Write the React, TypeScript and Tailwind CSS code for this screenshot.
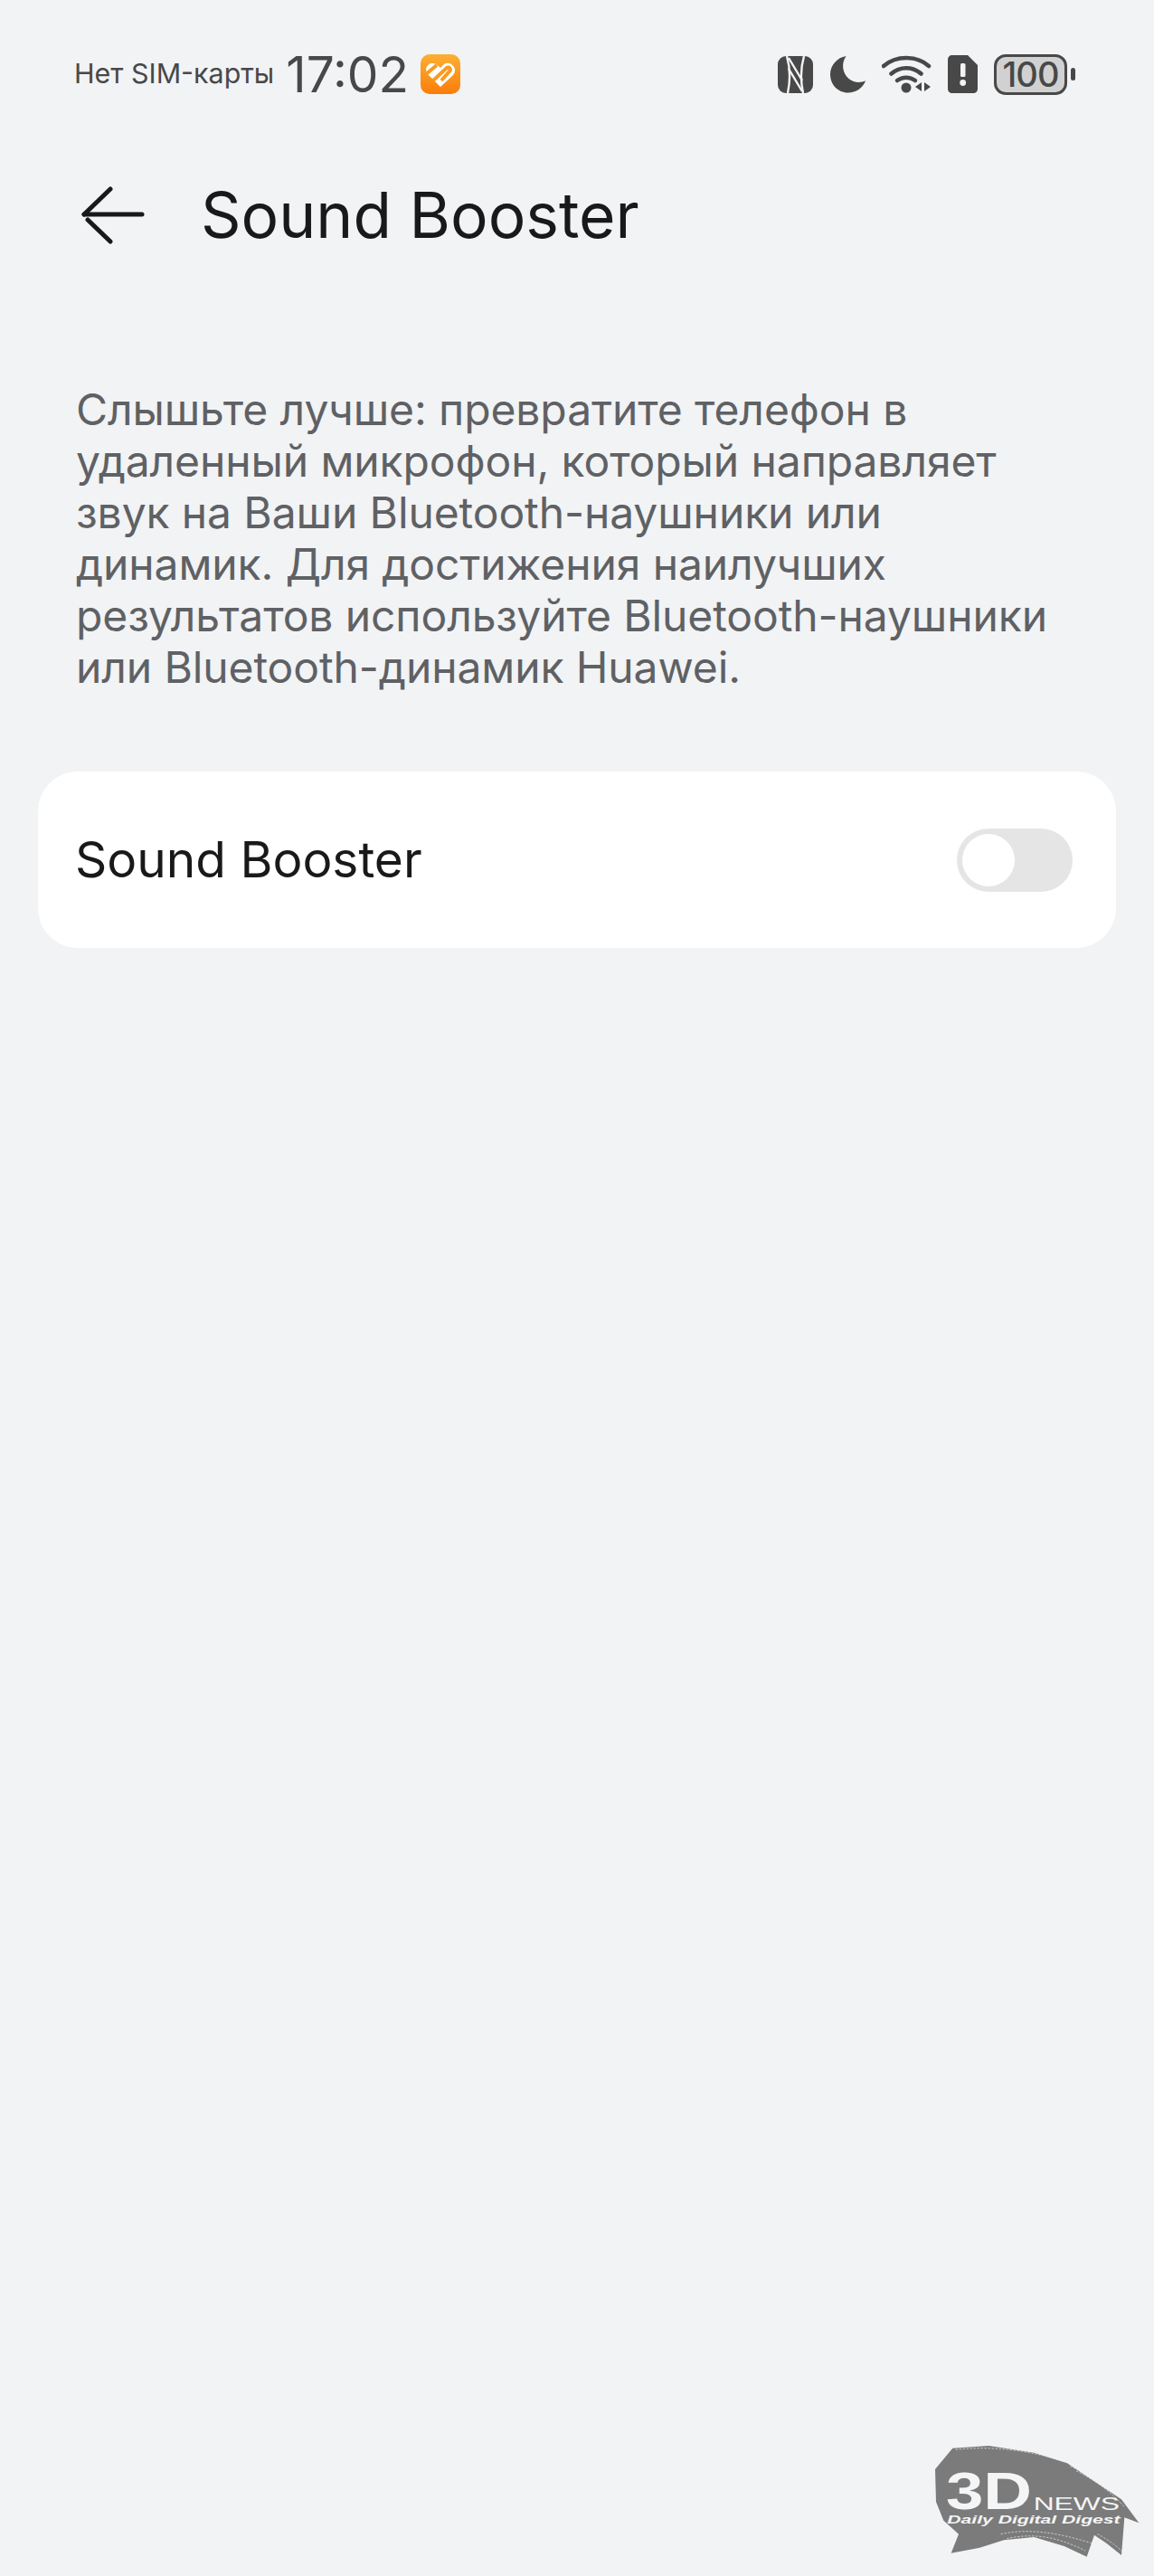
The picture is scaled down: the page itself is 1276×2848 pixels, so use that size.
const FONT = 'font-["Inter","Noto_Sans",sans-serif]';

function HealthIcon() {
  return (
    <svg width="44" height="44" viewBox="0 0 44 44" className="ml-[13px]">
      <defs>
        <linearGradient id="health" x1="0" y1="0" x2="0" y2="1">
          <stop offset="0" stopColor="#fbb034" />
          <stop offset="1" stopColor="#fb7d0a" />
        </linearGradient>
      </defs>
      <rect width="44" height="44" rx="10" fill="url(#health)" />
      <path
        d="M22 36 L8 22 C4 17 7 10 13 10 C17 10 19 12 22 15 L26 11 C30 8 37 11 38 17 C38 20 37 22 35 24 Z"
        fill="#fff"
      />
      <path d="M6 22 L18 12 M14 29 L29 15 C32 13 34 17 32 19 L23 29" fill="none" stroke="#fb9a1e" strokeWidth="4" />
    </svg>
  );
}

function NfcIcon() {
  return (
    <svg width="39" height="41" viewBox="0 0 39 41" fill="none" stroke="#f1f3f5" strokeWidth="2.4">
      <rect width="39" height="41" rx="9" fill="#484848" stroke="none" />
      <path d="M10 0 C14 14 14 27 11 41" />
      <path d="M29 0 C25 14 25 27 28 41" />
      <path d="M12 2 L27 27" />
      <path d="M12 14 L27 39" />
    </svg>
  );
}

function MoonIcon() {
  return (
    <svg width="40" height="42" viewBox="0 0 41 42" className="ml-[19px]">
      <path
        d="M18 0.5 C12 9 14 20 21 26 C27 31 34 31 40 28.5 C37 37 29 42 20 42 C9 42 0 33 0 21 C0 11 8 2 18 0.5 Z"
        fill="#484848"
      />
    </svg>
  );
}

function WifiIcon() {
  return (
    <svg width="56" height="44" viewBox="0 0 56 44" className="ml-[17px]" fill="none">
      <path d="M2 13 C16 1 38 1 52 13" stroke="#484848" strokeWidth="4.5" strokeLinecap="round" />
      <path d="M10.5 21.5 C20 13 34 13 43.5 21.5" stroke="#484848" strokeWidth="4.5" strokeLinecap="round" />
      <path d="M17 29 C23 24.5 31 24.5 37 29" stroke="#484848" strokeWidth="4.5" strokeLinecap="round" />
      <circle cx="27" cy="37" r="5.5" fill="#484848" />
      <path d="M44 31 V41 L37 36 Z M47 31 V41 L54 36 Z" fill="#484848" />
    </svg>
  );
}

function SimIcon() {
  return (
    <svg width="33" height="42" viewBox="0 0 33 42" className="ml-[17px]">
      <path
        d="M5 0 H22 L33 11 V37 C33 40 31 42 28 42 H5 C2 42 0 40 0 37 V5 C0 2 2 0 5 0 Z"
        fill="#484848"
      />
      <rect x="14" y="9" width="5.5" height="15" rx="1.5" fill="#f1f3f5" />
      <circle cx="16.7" cy="30.5" r="3.4" fill="#f1f3f5" />
    </svg>
  );
}

function Battery() {
  return (
    <div className="ml-[18px] flex items-center">
      <div className="flex h-[45px] w-[81px] items-center justify-center rounded-[13px] border-[3.5px] border-[#484848] bg-[#d1d1d1] text-[38px] leading-none font-medium tracking-[-1px] text-[#484848]">
        100
      </div>
      <div className="ml-[4px] h-[14px] w-[5px] rounded-full bg-[#484848]" />
    </div>
  );
}

function BackArrow() {
  return (
    <svg width="70" height="64" viewBox="0 0 70 64" fill="none" stroke="#191919" strokeWidth="5" strokeLinecap="round">
      <path d="M3 31 H67" />
      <path d="M32 3 L3 31" />
      <path d="M7 37 L32 61" />
    </svg>
  );
}

function StatusBar() {
  return (
    <div className="flex h-[60px] items-center justify-between pr-[87px] pl-[82px]">
      <div className="flex items-center">
        <span className="text-[30.4px] text-[#484848]">Нет SIM-карты</span>
        <span className="ml-[13px] text-[55px] text-[#484848]">17:02</span>
        <HealthIcon />
      </div>
      <div className="flex items-center">
        <NfcIcon />
        <MoonIcon />
        <WifiIcon />
        <SimIcon />
        <Battery />
      </div>
    </div>
  );
}

function Toggle() {
  return (
    <div className="flex h-[70px] w-[128px] items-center rounded-full bg-[#e5e5e5] pl-[6px]">
      <div className="h-[58px] w-[58px] rounded-full bg-white" />
    </div>
  );
}

/** Filigrane 3DNews en bas à droite, par-dessus la page. */
function Watermark() {
  return (
    <svg width="266" height="168" viewBox="0 0 798 504" className="absolute right-0 bottom-0">
      <path
        d="M130 80 L250 72 L400 95 L510 130 L600 190 L690 250 L748 328 L700 310 L690 435 L640 395 L600 368 L575 440 L500 405 L400 375 L300 385 L220 410 L125 428 L150 365 L100 320 L75 258 L72 150 Z"
        fill="#7b7b7b"
      />
      <g stroke="#f1f3f5" strokeWidth="2" strokeDasharray="7 5" fill="none">
        <path d="M140 85 C260 70 400 90 500 125" />
        <path d="M520 140 C600 170 670 220 725 285" />
        <path d="M540 155 C610 190 660 230 700 275" />
        <path d="M290 365 C380 345 480 360 590 395" />
        <path d="M310 380 C400 360 480 375 570 420" />
        <path d="M610 365 C640 380 670 400 695 425" />
      </g>
      <text
        x="108"
        y="283"
        textLength="285"
        lengthAdjust="spacingAndGlyphs"
        fontFamily="'Liberation Sans', sans-serif"
        fontWeight="700"
        fontSize="170"
        fill="#f4f5f6"
      >
        3D
      </text>
      <text
        x="398"
        y="284"
        textLength="286"
        lengthAdjust="spacingAndGlyphs"
        fontFamily="'Liberation Sans', sans-serif"
        fontSize="62"
        fill="#f4f5f6"
      >
        NEWS
      </text>
      <text
        x="112"
        y="330"
        textLength="574"
        lengthAdjust="spacingAndGlyphs"
        fontFamily="'Liberation Sans', sans-serif"
        fontWeight="700"
        fontStyle="italic"
        fontSize="40"
        fill="#f4f5f6"
      >
        Daily Digital Digest
      </text>
    </svg>
  );
}

export default function App() {
  return (
    <div className={`relative min-h-[2848px] overflow-hidden bg-[#f1f3f5] pt-[52px] ${FONT}`}>
      <StatusBar />

      <div className="mt-[86px] flex items-center pl-[90px]">
        <BackArrow />
        <h1 className="ml-[62px] text-[69.5px] leading-[80px] font-normal text-[#191919]">Sound Booster</h1>
      </div>

      <p className="mt-[146px] pl-[84px] text-[48px] leading-[57px] font-normal tracking-[-0.1px] whitespace-nowrap text-[#5f6164]">
        Слышьте лучше: превратите телефон в
        <br />
        удаленный микрофон, который направляет
        <br />
        звук на Ваши Bluetooth-наушники или
        <br />
        динамик. Для достижения наилучших
        <br />
        результатов используйте Bluetooth-наушники
        <br />
        или Bluetooth-динамик Huawei.
      </p>

      <div className="mx-[42px] mt-[87px] flex h-[195px] items-center justify-between rounded-[44px] bg-white pr-[48px] pl-[41px]">
        <span className="text-[55px] text-[#191919]">Sound Booster</span>
        <Toggle />
      </div>

      <Watermark />
    </div>
  );
}
